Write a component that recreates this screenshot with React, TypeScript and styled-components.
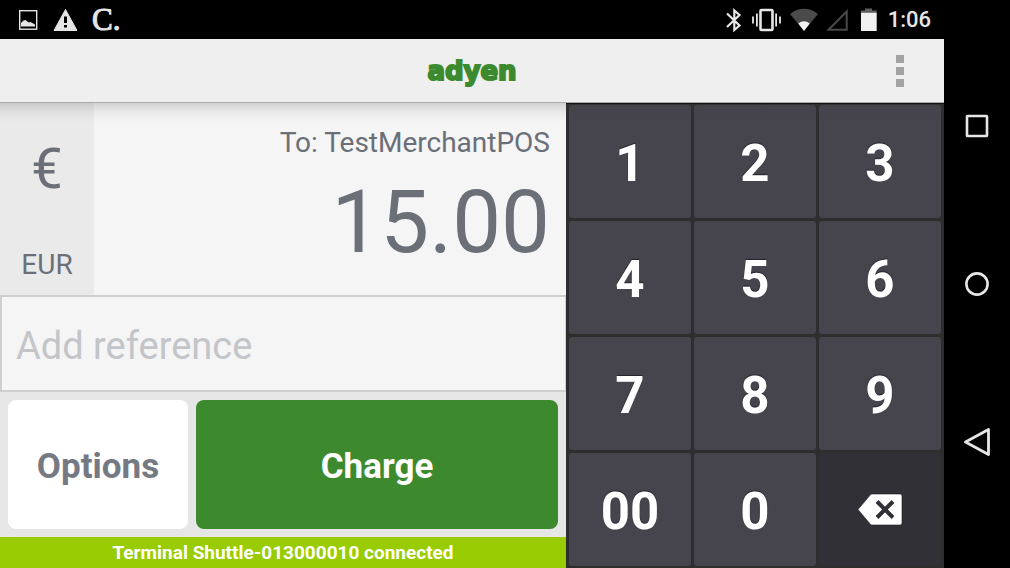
import React from 'react';
import styled, { createGlobalStyle } from 'styled-components';

const GlobalStyle = createGlobalStyle`
  *, *::before, *::after { box-sizing: border-box; }
  body {
    margin: 0;
    background: #000;
    font-family: Roboto, "Liberation Sans", sans-serif;
  }
  button, input { font-family: inherit; margin: 0; }
  button { border: 0; padding: 0; cursor: pointer; }
  svg { display: block; }
`;

const Device = styled.div`
  display: flex;
  min-height: 100vh;
  background: #000;
`;

const Screen = styled.div`
  flex: 1;
  min-width: 0;
  display: flex;
  flex-direction: column;
`;

const StatusBar = styled.div`
  display: flex;
  justify-content: space-between;
  height: 39px;
  padding: 0 13px 0 18px;
  color: #e6e6e6;
`;

const StatusGroup = styled.div<{ $gap: number }>`
  display: flex;
  align-items: center;
  gap: ${(p) => p.$gap}px;
`;

const AppMark = styled.span`
  font: 31px/40px "Liberation Serif", serif;
  -webkit-text-stroke: 1px #e6e6e6;
`;

const Clock = styled.time`
  font-size: 22px;
  font-weight: 500;
  line-height: 40px;
`;

const Header = styled.header`
  position: relative;
  display: grid;
  grid-template-columns: 1fr auto 1fr;
  align-items: center;
  height: 64px;
  background: #efefef;
  border-bottom: 1px solid #c4c4c4;

  &::after {
    content: '';
    position: absolute;
    top: 100%;
    left: 0;
    right: 0;
    height: 20px;
    background: linear-gradient(rgba(60, 60, 60, 0.2), rgba(60, 60, 60, 0.06) 50%, rgba(60, 60, 60, 0));
    pointer-events: none;
    z-index: 1;
  }
`;

const Brand = styled.h1`
  grid-column: 2;
  margin: 0;
  font: bold 26px/62px "DejaVu Sans", sans-serif;
  color: #3d8a2e;
  -webkit-text-stroke: 2px #3d8a2e;
`;

const MenuButton = styled.button`
  justify-self: end;
  display: flex;
  flex-direction: column;
  align-items: center;
  justify-content: center;
  gap: 4px;
  width: 48px;
  height: 62px;
  margin-right: 20px;
  background: none;
`;

const MenuDot = styled.span`
  width: 8px;
  height: 8px;
  background: #a3a3a3;
`;

const Body = styled.main`
  flex: 1;
  display: flex;
`;

const Payment = styled.section`
  flex: 1;
  min-width: 0;
  display: flex;
  flex-direction: column;
  background: #e6e6e6;
`;

const AmountRow = styled.div`
  flex: 1;
  display: flex;
  background: #f5f5f5;
`;

const CurrencyButton = styled.button`
  display: flex;
  flex-direction: column;
  align-items: center;
  justify-content: space-between;
  width: 94px;
  padding: 34px 0 14px;
  background: #eaeaea;
  color: #6a6f78;
`;

const CurrencySymbol = styled.span`
  font-size: 56px;
  line-height: 64px;
`;

const CurrencyCode = styled.span`
  font-size: 28px;
  line-height: 32px;
`;

const AmountPanel = styled.div`
  flex: 1;
  padding: 24px 16px 0 0;
  text-align: right;
  color: #6a6f78;
`;

const Recipient = styled.div`
  font-size: 28px;
  line-height: 32px;
`;

const Amount = styled.output`
  display: block;
  font-size: 87px;
  line-height: 126px;
`;

const ReferenceInput = styled.input`
  width: 100%;
  height: 97px;
  padding: 4px 14px 0;
  border: 2px solid #cfcfcf;
  border-right-width: 1px;
  border-radius: 0;
  outline: none;
  background: #f5f5f5;
  color: #6a6f78;
  font-size: 38px;

  &::placeholder { color: #c3c5c9; opacity: 1; }
`;

const Actions = styled.div`
  display: grid;
  grid-template-columns: 180fr 362fr;
  gap: 8px;
  padding: 8px;
`;

const ActionButton = styled.button<{ $primary?: boolean }>`
  height: 129px;
  padding-top: 4px;
  border-radius: 8px;
  background: ${(p) => (p.$primary ? '#3d8a2e' : '#fff')};
  color: ${(p) => (p.$primary ? '#fff' : '#757983')};
  font-size: 35px;
  font-weight: 700;
`;

const TerminalStatus = styled.div`
  padding-top: 1px;
  background: #99cc00;
  color: #fff;
  font-size: 19px;
  font-weight: 700;
  line-height: 30px;
  text-align: center;
`;

const Keypad = styled.section`
  width: 378px;
  display: grid;
  grid-template-columns: repeat(3, 1fr);
  grid-auto-rows: 1fr;
  gap: 3px;
  padding: 1px 3px 2px;
  background: #2e2e2e;
  border-top: 1px solid #080808;
`;

const Key = styled.button<{ $dark?: boolean }>`
  display: flex;
  align-items: center;
  justify-content: center;
  padding-top: ${(p) => (p.$dark ? 0 : 4)}px;
  border-radius: 3px;
  background: ${(p) => (p.$dark ? '#313036' : '#46444d')};
  color: #fff;
  font-size: 51px;
  font-weight: 700;
  text-shadow: 0 -1px 1px #24232b;
`;

const NavBar = styled.nav`
  width: 66px;
  display: flex;
  flex-direction: column;
  align-items: center;
  justify-content: center;
  gap: 110px;
`;

const NavButton = styled.button`
  display: grid;
  place-items: center;
  width: 48px;
  height: 48px;
  background: none;
`;

const PictureIcon = () => (
  <svg width="20" height="22" viewBox="0 0 20 22" aria-hidden="true">
    <rect x="1.7" y="1.7" width="17" height="18.5" fill="none" stroke="#e6e6e6" strokeWidth="1.4" />
    <path d="M3 17.5V14l2.5-2.5 2-.5 3 2.5 2-.5 4.5 2.5v2z" fill="#e6e6e6" />
  </svg>
);

const WarningIcon = () => (
  <svg width="24" height="24" viewBox="0 0 24 24" aria-hidden="true">
    <path d="M12.5 1.5L24 22.5H1z" fill="#e6e6e6" stroke="#e6e6e6" strokeLinejoin="round" />
    <path d="M11 8.5h3V15h-3zM11 17h3v2.5h-3z" fill="#000" />
  </svg>
);

const BluetoothIcon = () => (
  <svg width="18" height="24" viewBox="0 0 18 24" fill="none" stroke="#e6e6e6" strokeWidth="2.2" aria-hidden="true">
    <path d="M2 5.5L14.5 17.5 9.3 22V2.5L14.5 7 2 19" />
  </svg>
);

const VibrateIcon = () => (
  <svg width="31" height="24" viewBox="0 0 31 24" fill="none" stroke="#e6e6e6" aria-hidden="true">
    <rect x="9.5" y="2" width="12" height="20" rx="1" strokeWidth="2.6" />
    <path d="M5.9 5.5v13M25.1 5.5v13M2 8.5v7M29 8.5v7" strokeWidth="1.8" />
  </svg>
);

const WifiIcon = () => (
  <svg width="28" height="24" viewBox="0 0 28 24" aria-hidden="true">
    <path d="M0 6C8 -1 20 -1 28 6L14 23z" fill="#4a4a4a" />
    <path d="M8.3 15.5Q14 11 19.7 15.5L14 23z" fill="#f2f2f2" />
  </svg>
);

const SignalIcon = () => (
  <svg width="22" height="24" viewBox="0 0 22 24" aria-hidden="true">
    <path d="M20.7 3.5v18.3H2.5z" fill="none" stroke="#4a4a4a" strokeWidth="2" />
  </svg>
);

const BatteryIcon = () => (
  <svg width="24" height="24" viewBox="0 0 24 24" aria-hidden="true">
    <path d="M9 .5h7v2h4.7v3H5v-3h4z" fill="#606060" />
    <path d="M5 4.8h15.7V23H5z" fill="#f0f0f0" />
  </svg>
);

const BackspaceIcon = () => (
  <svg width="46" height="34" viewBox="0 0 46 34" aria-hidden="true">
    <path d="M14 1H43a2 2 0 0 1 2 2V30a2 2 0 0 1-2 2H14L1 16.5z" fill="#fff" stroke="#1c1b21" strokeWidth=".6" />
    <path d="M20 8.5L36 24.500M36 8.5L20 24.5" stroke="#313036" strokeWidth="4" />
  </svg>
);

const RecentsIcon = () => (
  <svg width="26" height="28" viewBox="0 0 26 28" aria-hidden="true">
    <rect x="3" y="4" width="20" height="20" rx=".5" fill="none" stroke="#e6e6e6" strokeWidth="2.6" />
  </svg>
);

const HomeIcon = () => (
  <svg width="26" height="28" viewBox="0 0 26 28" aria-hidden="true">
    <circle cx="13" cy="14" r="10.6" fill="none" stroke="#e6e6e6" strokeWidth="2.6" />
  </svg>
);

const BackIcon = () => (
  <svg width="28" height="28" viewBox="0 0 28 28" aria-hidden="true">
    <path d="M25.5 1.5v25L2.5 14z" fill="none" stroke="#e6e6e6" strokeWidth="2.8" strokeLinejoin="round" />
  </svg>
);

const digits = ['1', '2', '3', '4', '5', '6', '7', '8', '9', '00', '0'];

export default function App() {
  return (
    <>
      <GlobalStyle />
      <Device>
        <Screen>
          <StatusBar>
            <StatusGroup $gap={15}>
              <PictureIcon />
              <WarningIcon />
              <AppMark>C.</AppMark>
            </StatusGroup>
            <StatusGroup $gap={8}>
              <BluetoothIcon />
              <VibrateIcon />
              <WifiIcon />
              <SignalIcon />
              <BatteryIcon />
              <Clock>1:06</Clock>
            </StatusGroup>
          </StatusBar>
          <Header>
            <Brand>adyen</Brand>
            <MenuButton type="button" aria-label="More options">
              <MenuDot />
              <MenuDot />
              <MenuDot />
            </MenuButton>
          </Header>
          <Body>
            <Payment>
              <AmountRow>
                <CurrencyButton type="button">
                  <CurrencySymbol>€</CurrencySymbol>
                  <CurrencyCode>EUR</CurrencyCode>
                </CurrencyButton>
                <AmountPanel>
                  <Recipient>To: TestMerchantPOS</Recipient>
                  <Amount>15.00</Amount>
                </AmountPanel>
              </AmountRow>
              <ReferenceInput type="text" placeholder="Add reference" aria-label="Add reference" />
              <Actions>
                <ActionButton type="button">Options</ActionButton>
                <ActionButton type="button" $primary>Charge</ActionButton>
              </Actions>
              <TerminalStatus role="status">Terminal Shuttle-013000010 connected</TerminalStatus>
            </Payment>
            <Keypad aria-label="Keypad">
              {digits.map((digit) => (
                <Key key={digit} type="button">{digit}</Key>
              ))}
              <Key type="button" $dark aria-label="Backspace">
                <BackspaceIcon />
              </Key>
            </Keypad>
          </Body>
        </Screen>
        <NavBar aria-label="System">
          <NavButton type="button" aria-label="Recents"><RecentsIcon /></NavButton>
          <NavButton type="button" aria-label="Home"><HomeIcon /></NavButton>
          <NavButton type="button" aria-label="Back"><BackIcon /></NavButton>
        </NavBar>
      </Device>
    </>
  );
}
